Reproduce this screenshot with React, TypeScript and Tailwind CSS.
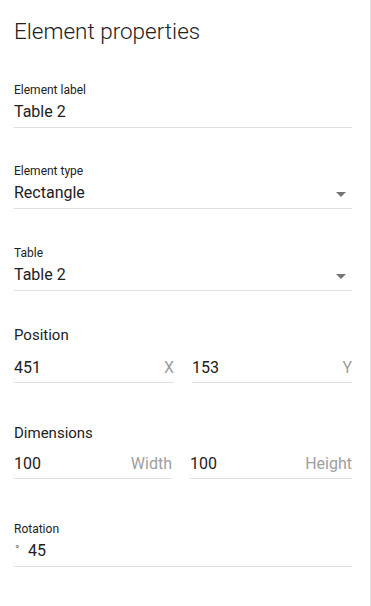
import React from "react";

const font = { fontFamily: "Roboto, 'Liberation Sans', Arial, sans-serif" };

function Arrow() {
  return (
    <span className="ml-auto mr-[6px] mt-[2px] h-0 w-0 border-x-[5px] border-t-[5px] border-x-transparent border-t-[#757575]" />
  );
}

function Field({ label, value, select }: { label: string; value: string; select?: boolean }) {
  return (
    <div className="border-b border-[#e0e0e0] pb-[3px]">
      <div className="text-[12px] leading-[16px] text-[#212121]">{label}</div>
      <div className="mt-[2px] flex items-center text-[16px] leading-[24px] text-[#212121]">
        <span>{value}</span>
        {select && <Arrow />}
      </div>
    </div>
  );
}

function SuffixInput({ value, suffix, className }: { value: string; suffix: string; className?: string }) {
  return (
    <div className={"flex items-center border-b border-[#e0e0e0] pb-[2px] text-[16px] leading-[24px] " + (className ?? "")}>
      <span className="text-[#212121]">{value}</span>
      <span className="ml-auto text-[#9e9e9e]">{suffix}</span>
    </div>
  );
}

export default function App() {
  return (
    <div
      className="box-border h-[606px] w-[371px] overflow-hidden border-r border-[#e0e0e0] bg-white pl-[14px] pr-[18px] pt-[15px]"
      style={font}
    >
      <h1 className="text-[22.5px] font-light leading-[32px] text-[#212121]">Element properties</h1>

      <div className="mt-[35px]">
        <Field label="Element label" value="Table 2" />
      </div>
      <div className="mt-[35px]">
        <Field label="Element type" value="Rectangle" select />
      </div>
      <div className="mt-[36px]">
        <Field label="Table" value="Table 2" select />
      </div>

      <div className="mt-[32px] text-[15px] leading-[24px] text-[#212121]">Position</div>
      <div className="mt-[9px] grid grid-cols-2 gap-[18px]">
        <SuffixInput value="451" suffix="X" />
        <SuffixInput value="153" suffix="Y" />
      </div>

      <div className="mt-[38px] text-[15px] leading-[24px] text-[#212121]">Dimensions</div>
      <div className="mt-[7px] flex gap-[18px]">
        <SuffixInput value="100" suffix="Width" className="w-[158px]" />
        <SuffixInput value="100" suffix="Height" className="flex-1" />
      </div>

      <div className="mt-[42px] border-b border-[#e0e0e0] pb-[3px]">
        <div className="text-[12px] leading-[16px] text-[#212121]">Rotation</div>
        <div className="mt-[2px] flex items-center text-[16px] leading-[24px] text-[#212121]">
          <span className="w-[14px] pl-[1px] text-[12px] leading-[24px] text-[#757575] -translate-y-[1px]">°</span>
          <span>45</span>
        </div>
      </div>
    </div>
  );
}
